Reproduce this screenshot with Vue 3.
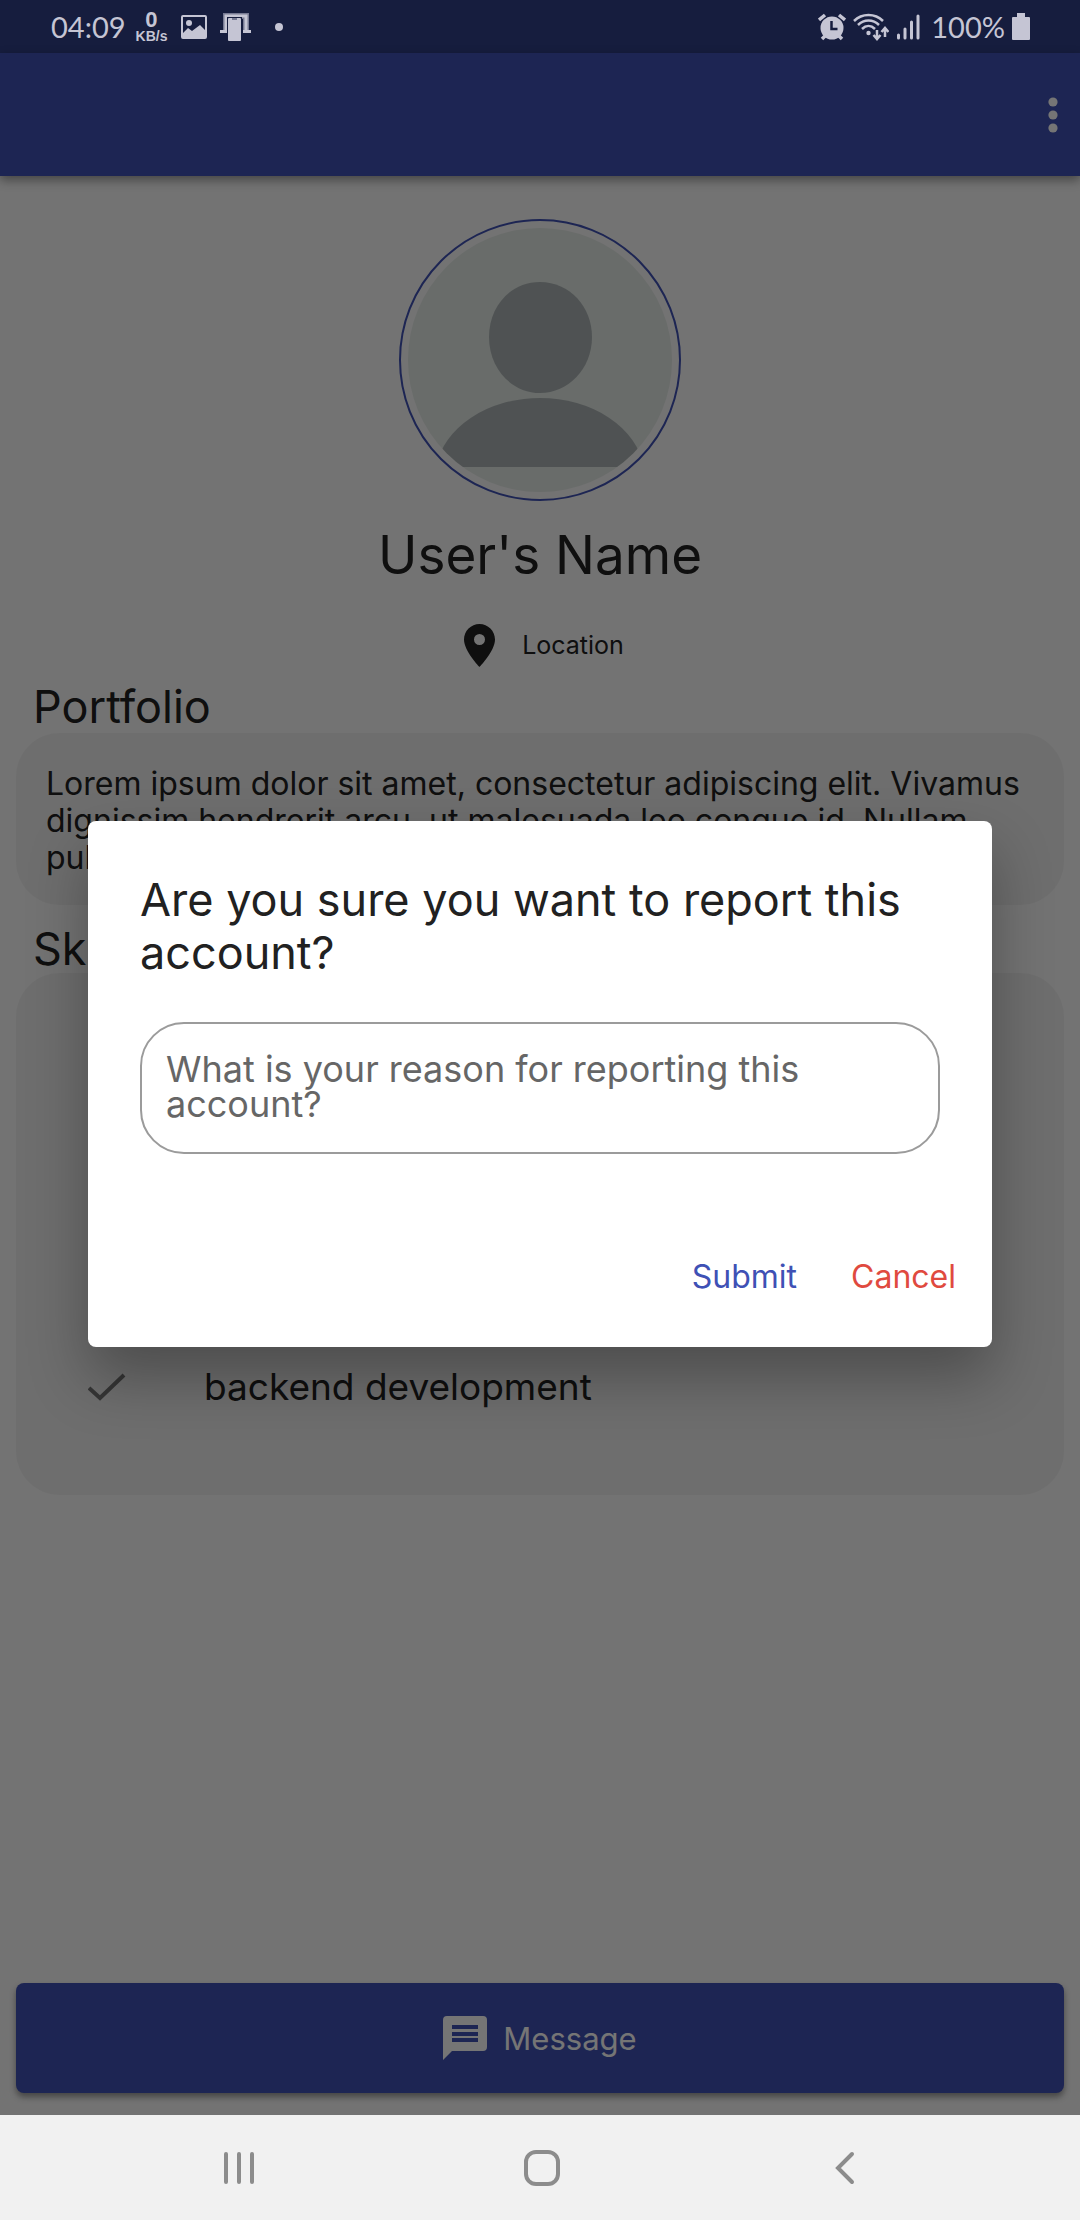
<script setup>
import { ref } from 'vue'

const reason = ref('')
const skills = ['backend development']
const bio =
  'Lorem ipsum dolor sit amet, consectetur adipiscing elit. Vivamus dignissim hendrerit arcu, ut malesuada leo congue id. Nullam pulvinar'
</script>

<template>
  <div class="phone">
    <header class="status">
      <div class="status-group">
        <span class="clock">04:09</span>
        <span class="speed"><b>0</b><small>KB/s</small></span>
        <svg class="pic" width="26" height="24" viewBox="0 0 26 24">
          <path fill="currentColor" fill-rule="evenodd" d="M2 0h22a2 2 0 0 1 2 2v20a2 2 0 0 1-2 2H2a2 2 0 0 1-2-2V2a2 2 0 0 1 2-2zM2 2v16l5-5 4 3 8-6 5 5V2z" />
          <circle cx="8" cy="8" r="3" fill="currentColor" />
        </svg>
        <svg class="dock" width="31" height="29" viewBox="0 0 31 29">
          <path fill="none" stroke="#777a93" stroke-width="6" d="M6 18V4h20v14" />
          <path fill="none" stroke="currentColor" stroke-width="3" d="M6 18V4h20v14" />
          <path fill="currentColor" d="M0 18h7v3H0zM23 18h8v3h-8z" />
          <rect x="7" y="5" width="15" height="24" fill="#161d3e" />
          <rect x="8" y="6" width="13" height="23" rx="1" fill="currentColor" />
          <path fill="#777a93" d="M12 6h5v2h-5z" />
        </svg>
        <i class="dot"></i>
      </div>
      <div class="status-group right">
        <svg width="28" height="28" viewBox="0 0 28 28">
          <path stroke="currentColor" stroke-width="3.500" d="M1 7l6-5M27 7l-6-5M4 26l4-4M24 26l-4-4" />
          <circle cx="14" cy="15" r="11.500" fill="currentColor" />
          <path fill="none" stroke="#161d3e" stroke-width="2.500" d="M13.500 8v8h6" />
        </svg>
        <svg class="wifi" width="36" height="28" viewBox="0 0 36 28">
          <g fill="none" stroke="currentColor" stroke-width="2.500">
            <path d="M1 8C9 0 22 0 30 8M5 12c6-6 15-6 21 0M9 16c4-4 9-4 13 0" />
            <path d="M24 17v8M20.500 22l3.500 4 3.500-4M32 24v-8M28.500 19l3.500-4 3.500 4" />
          </g>
          <circle cx="15.500" cy="20" r="2.200" fill="currentColor" />
        </svg>
        <svg width="24" height="28" viewBox="0 0 24 28">
          <path stroke="currentColor" stroke-width="3" stroke-linecap="round" d="M2.500 22v3M9 16v9M15.500 9v16M22 3v22" />
        </svg>
        <span class="percent">100%</span>
        <svg width="18" height="28" viewBox="0 0 18 28">
          <path fill="currentColor" d="M5 0h8v4h4a1 1 0 0 1 1 1v21a1 1 0 0 1-1 1H1a1 1 0 0 1-1-1V5a1 1 0 0 1 1-1h4z" />
        </svg>
      </div>
    </header>

    <div class="stage">
      <div class="appbar">
        <button class="more" aria-label="More options">
          <svg width="10" height="36" viewBox="0 0 10 36" fill="currentColor">
            <circle cx="5" cy="5" r="4.600" /><circle cx="5" cy="18" r="4.600" /><circle cx="5" cy="31" r="4.600" />
          </svg>
        </button>
      </div>

      <main class="profile">
        <div class="avatar">
          <svg width="264" height="264" viewBox="0 0 264 264">
            <defs>
              <clipPath id="face"><circle cx="132" cy="132" r="132" /></clipPath>
            </defs>
            <g clip-path="url(#face)">
              <path fill="#e5ebe7" d="M0 0h264v264H0z" />
              <path fill="#acb4b5" d="M132 54c30 0 52 25 52 55 0 32-24 56-52 56s-51-24-51-56c0-30 21-55 51-55z" />
              <path fill="#acb4b5" d="M28 239A105 80 0 0 1 236 239z" />
            </g>
          </svg>
        </div>
        <h1>User's Name</h1>
        <p class="location">
          <svg width="31" height="43" viewBox="0 0 31 43">
            <path fill="currentColor" fill-rule="evenodd" d="M15.500 0C7 0 0 7 0 15.500 0 27 15.500 43 15.500 43S31 27 31 15.500C31 7 24 0 15.500 0zm0 10a5.500 5.500 0 1 1 0 11 5.500 5.500 0 0 1 0-11z" />
          </svg>
          <span>Location</span>
        </p>

        <h2>Portfolio</h2>
        <section class="card bio"><p>{{ bio }}</p></section>

        <h2>Skills</h2>
        <ul class="card skills">
          <li v-for="skill in skills" :key="skill">
            <svg width="38" height="28" viewBox="0 0 38 28">
              <path fill="none" stroke="#747474" stroke-width="4" d="M1 15l11 10L36 2" />
            </svg>
            <span>{{ skill }}</span>
          </li>
        </ul>
      </main>

      <button class="message">
        <svg width="44" height="44" viewBox="0 0 44 44">
          <path fill="currentColor" fill-rule="evenodd" d="M4 0h36a4 4 0 0 1 4 4v27a4 4 0 0 1-4 4H9l-9 9V4a4 4 0 0 1 4-4zM9 9v4h26V9zm0 7v4h26v-4zm0 6v4h26v-4z" />
        </svg>
        <span>Message</span>
      </button>

      <div class="scrim">
        <form class="dialog" role="dialog" aria-labelledby="report-title" @submit.prevent>
          <h2 id="report-title">Are you sure you want to report this account?</h2>
          <textarea
            v-model="reason"
            rows="2"
            aria-labelledby="report-title"
            placeholder="What is your reason for reporting this account?"
          ></textarea>
          <div class="actions">
            <button type="submit" class="submit">Submit</button>
            <button type="button" class="cancel">Cancel</button>
          </div>
        </form>
      </div>
    </div>

    <nav class="navbar">
      <button aria-label="Recent apps">
        <svg width="34" height="34" viewBox="0 0 34 34">
          <path stroke="currentColor" stroke-width="4" stroke-linecap="round" d="M4 3v28M17 3v28M30 3v28" />
        </svg>
      </button>
      <button aria-label="Home">
        <svg width="36" height="36" viewBox="0 0 36 36">
          <rect x="2" y="2" width="32" height="32" rx="10" fill="none" stroke="currentColor" stroke-width="4" />
        </svg>
      </button>
      <button aria-label="Back">
        <svg width="20" height="34" viewBox="0 0 20 34">
          <path fill="none" stroke="currentColor" stroke-width="4" stroke-linecap="round" d="M17 3L3 17l14 14" />
        </svg>
      </button>
    </nav>
  </div>
</template>

<style>
body {
  margin: 0;
}
</style>

<style scoped>
* {
  box-sizing: border-box;
}

svg {
  display: block;
  flex: none;
}

h1,
h2,
p,
ul {
  margin: 0;
  padding: 0;
  font-weight: 400;
}

button {
  border: 0;
  padding: 0;
  background: none;
  color: inherit;
  font: inherit;
}

.phone {
  display: flex;
  flex-direction: column;
  min-height: 100vh;
  font-family: Inter, "Noto Sans", sans-serif;
  color: #212121;
  background: #fafafa;
}

/* system status bar */
.status {
  display: flex;
  justify-content: space-between;
  height: 53px;
  padding: 0 50px 0 51px;
  background: #161d3e;
  color: #c5c5d4;
}

.status-group {
  display: flex;
  align-items: center;
}

.clock,
.percent {
  font-family: Lato, sans-serif;
  font-size: 29px;
  line-height: 36px;
}

.percent {
  margin-left: 4px;
}

.speed {
  display: flex;
  flex-direction: column;
  align-items: center;
  margin: 0 14px 0 10px;
  font-family: "Liberation Sans", sans-serif;
  font-weight: 700;
}

.speed b {
  font-size: 22px;
  line-height: 18px;
}

.speed small {
  font-size: 14px;
  line-height: 14px;
}

.dock {
  margin: 0 24px 0 13px;
}

.dot {
  width: 8px;
  height: 8px;
  border-radius: 50%;
  background: currentColor;
}

.right {
  gap: 7px;
}

/* profile page */
.stage {
  position: relative;
  display: flex;
  flex: 1;
  flex-direction: column;
}

.appbar {
  display: flex;
  align-items: center;
  justify-content: flex-end;
  height: 123px;
  padding-right: 22px;
  background: #3f51b5;
  color: #fff;
  box-shadow: 0 4px 10px rgba(0, 0, 0, 0.4);
}

.profile {
  display: flex;
  flex: 1;
  flex-direction: column;
  padding: 43px 16px 0;
}

.avatar {
  align-self: center;
  padding: 7px;
  border: 2px solid #3f51b5;
  border-radius: 50%;
}

h1 {
  margin-top: 22px;
  font-size: 53px;
  line-height: 64px;
  text-align: center;
}

.location {
  display: flex;
  align-items: center;
  justify-content: center;
  gap: 27px;
  margin: 36px 0 16px;
  padding-left: 8px;
  font-size: 25px;
  line-height: 44px;
}

.profile h2 {
  padding-left: 17px;
  font-size: 45px;
  line-height: 48px;
}

.card {
  border-radius: 44px;
  background: #efefef;
}

.bio {
  height: 172px;
  margin: 2px 0 20px;
  padding: 32px 30px;
  font-size: 32px;
  line-height: 37px;
}

.skills {
  display: flex;
  flex-direction: column;
  justify-content: flex-end;
  min-height: 522px;
  padding: 0 72px 82px;
  list-style: none;
}

.skills li {
  display: flex;
  align-items: center;
  gap: 78px;
  font-size: 37px;
  line-height: 52px;
}

.message {
  display: flex;
  align-items: center;
  justify-content: center;
  gap: 16px;
  height: 110px;
  margin: 0 16px 22px;
  border-radius: 8px;
  background: #3f51b5;
  color: #fff;
  font-size: 31px;
  box-shadow: 0 4px 6px rgba(0, 0, 0, 0.4);
}

/* report dialog */
.scrim {
  position: absolute;
  inset: 0;
  display: flex;
  align-items: center;
  justify-content: center;
  padding: 0 88px;
  background: rgba(0, 0, 0, 0.54);
}

.dialog {
  width: 100%;
  padding: 52px 52px 30px;
  border-radius: 8px;
  background: #fff;
  box-shadow: 0 30px 60px rgba(0, 0, 0, 0.3);
}

.dialog h2 {
  font-size: 45px;
  line-height: 53px;
}

textarea {
  display: block;
  width: 100%;
  height: 132px;
  margin: 43px 0 83px;
  padding: 28px 24px;
  border: 2px solid #9b9b9b;
  border-radius: 44px;
  background: none;
  color: #212121;
  font-family: inherit;
  font-size: 36px;
  line-height: 35px;
  resize: none;
  overflow: hidden;
}

textarea::placeholder {
  color: #666;
  opacity: 1;
}

.actions {
  display: flex;
  justify-content: flex-end;
  gap: 54px;
  margin-right: -16px;
  font-size: 32px;
  line-height: 80px;
}

.submit {
  color: #3f51b5;
}

.cancel {
  color: #e04a3f;
}

/* system navigation bar */
.navbar {
  display: flex;
  height: 105px;
  padding: 0 84px 0 88px;
  background: #f1f1f1;
  color: #8c8c8c;
}

.navbar button {
  display: flex;
  flex: 1;
  align-items: center;
  justify-content: center;
}
</style>
